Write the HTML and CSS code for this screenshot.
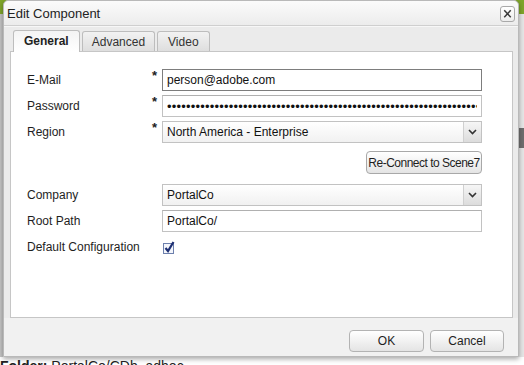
FILE: index.html
```html
<!DOCTYPE html>
<html lang="en">
<head>
  <meta charset="UTF-8" />
  <title>Edit Component</title>
  <link rel="stylesheet" href="styles.css">
</head>
<body>

  <div class="page">
    <div class="page-header"></div>
    <div class="page-body">
      <div class="page-side"></div>
      <div class="page-main"></div>
      <div class="page-rail">
        <div class="rail-block"></div>
      </div>
    </div>
    <div class="page-folder"><b>Folder:</b> PortalCo/CDb_adhoc</div>
  </div>

  <div class="dialog">
    <div class="dialog-title">
      <span>Edit Component</span>
      <button class="close-btn" title="Close">
        <svg width="14" height="15" viewBox="0 0 14 15">
          <path d="M3.5 4 L10.5 11.5 M10.5 4 L3.5 11.5" stroke="#3a3a3a" stroke-width="1.6" fill="none"/>
        </svg>
      </button>
    </div>

    <div class="dialog-body">
      <ul class="tabs">
        <li class="tab active">General</li>
        <li class="tab">Advanced</li>
        <li class="tab">Video</li>
      </ul>

      <div class="tab-panel">
        <div class="form-grid">
          <label>E-Mail</label>
          <span class="req">*</span>
          <input type="text" class="field focused" value="person@adobe.com">

          <label>Password</label>
          <span class="req">*</span>
          <input type="password" class="field password" value="passwordpasswordpasswordpasswordpasswordpasswordpasswordpasswordpasswordpassword">

          <label>Region</label>
          <span class="req">*</span>
          <div class="select">
            <span class="select-text">North America - Enterprise</span>
            <span class="select-arrow">
              <svg width="9" height="6" viewBox="0 0 9 6"><path d="M1 1 L4.5 4.5 L8 1" stroke="#333" stroke-width="1.6" fill="none"/></svg>
            </span>
          </div>

          <div class="button-row">
            <button class="btn reconnect">Re-Connect to Scene7</button>
          </div>

          <label>Company</label>
          <span></span>
          <div class="select">
            <span class="select-text">PortalCo</span>
            <span class="select-arrow">
              <svg width="9" height="6" viewBox="0 0 9 6"><path d="M1 1 L4.5 4.5 L8 1" stroke="#333" stroke-width="1.6" fill="none"/></svg>
            </span>
          </div>

          <label>Root Path</label>
          <span></span>
          <input type="text" class="field" value="PortalCo/">

          <label>Default Configuration</label>
          <span></span>
          <div class="check">
            <svg width="14" height="14" viewBox="0 0 14 14">
              <rect x="1.5" y="3.5" width="10" height="10" fill="#f4f6fb" stroke="#6d80ad"/>
              <path d="M3.5 8 L6 11 L11.5 2" stroke="#1d2f73" stroke-width="2.2" fill="none"/>
            </svg>
          </div>
        </div>
      </div>
    </div>

    <div class="dialog-footer">
      <button class="btn footer-btn ok">OK</button>
      <button class="btn footer-btn">Cancel</button>
    </div>
  </div>

</body>
</html>
```

FILE: styles.css
```css
* {
  margin: 0;
  padding: 0;
  box-sizing: border-box;
  font-family: 'Liberation Sans', Arial, sans-serif;
}

body {
  width: 524px;
  height: 365px;
  overflow: hidden;
  background-color: #ffffff;
  position: relative;
  font-size: 12px;
  color: #1e1e1e;
}

/* page behind the dialog */
.page {
  display: flex;
  flex-direction: column;
  height: 365px;
}

.page-header {
  height: 14px;
  background-color: #7fa52a;
}

.page-body {
  flex: 1;
  display: flex;
}

.page-side {
  width: 3px;
  background-color: #c4c4c4;
}

.page-main {
  flex: 1;
  background-color: #fafafa;
}

.page-rail {
  width: 6px;
  background-color: #e6e6e6;
  padding-top: 114px;
}

.rail-block {
  height: 20px;
  background-color: #6e6e6e;
}

.page-folder {
  height: 8px;
  line-height: 18px;
  overflow: hidden;
  font-size: 14px;
  color: #222;
  background-color: #fff;
}

/* dialog window */
.dialog {
  position: absolute;
  top: 0;
  left: 3px;
  width: 516px;
  height: 357px;
  display: flex;
  flex-direction: column;
  background-color: #ebebeb;
  border: 1px solid #b9b9b9;
  border-radius: 5px 5px 0 0;
  box-shadow: 0 2px 5px rgba(0, 0, 0, 0.35);
}

.dialog-title {
  height: 25px;
  display: flex;
  justify-content: space-between;
  align-items: center;
  padding: 1px 3px 0 3px;
  font-size: 13px;
  color: #222;
  background: linear-gradient(#fbfbfb, #ececec);
  border-bottom: 1px solid #cfcfcf;
  border-radius: 5px 5px 0 0;
}

.close-btn {
  width: 15px;
  height: 16px;
  display: flex;
  align-items: center;
  justify-content: center;
  background: linear-gradient(#ffffff, #ededed);
  border: 1px solid #a9a9a9;
  border-radius: 3px;
}

.dialog-body {
  display: flex;
  flex-direction: column;
  padding: 0 5px 0 6px;
  border-top: 1px solid #f7f7f7;
}

.tabs {
  list-style: none;
  height: 24px;
  display: flex;
  align-items: flex-end;
  gap: 2px;
  padding-left: 3px;
  position: relative;
  z-index: 1;
}

.tab {
  height: 20px;
  padding: 0 10px;
  display: flex;
  align-items: center;
  color: #333;
  background: linear-gradient(#f2f2f2, #dedede);
  border: 1px solid #bdbdbd;
  border-bottom: none;
  border-radius: 3px 3px 0 0;
}

.tab.active {
  height: 22px;
  margin-bottom: -1px;
  padding: 0 10px 1px 10px;
  font-weight: bold;
  color: #222;
  background: linear-gradient(#f4f4f4, #ffffff);
}

.tab:nth-child(2) {
  padding: 0 9px;
  min-width: 67px;
}

.tab:nth-child(3) {
  min-width: 47px;
}

.tab-panel {
  height: 267px;
  background-color: #ffffff;
  border: 1px solid #c6c6c6;
  padding: 17px 30px 0 16px;
}

.form-grid {
  display: grid;
  grid-template-columns: 125px 10px 1fr;
  grid-auto-rows: minmax(22px, auto);
  row-gap: 4px;
  align-items: center;
}

.form-grid label {
  color: #1e1e1e;
}

.req {
  align-self: start;
  font-size: 13px;
  font-weight: bold;
  line-height: 12px;
  padding-top: 1px;
  color: #222;
}

.field {
  height: 22px;
  width: 100%;
  padding: 0 4px;
  font-size: 12px;
  color: #111;
  border: 1px solid #c2c2c2;
  border-top-color: #b0b0b0;
  background-color: #ffffff;
  outline: none;
}

.field.focused {
  border-color: #7d7d7d;
}

.field.password {
  font-size: 13px;
  letter-spacing: 0.2px;
}

.select {
  height: 22px;
  display: flex;
  align-items: center;
  border: 1px solid #c2c2c2;
  background: linear-gradient(#ffffff, #f1f1f1);
}

.select-text {
  flex: 1;
  padding-left: 4px;
  color: #111;
}

.select-arrow {
  width: 18px;
  height: 20px;
  display: flex;
  align-items: center;
  justify-content: center;
  border-left: 1px solid #d0d0d0;
  background: linear-gradient(#f6f6f6, #dcdcdc);
}

.button-row {
  grid-column: 1 / 4;
  display: flex;
  justify-content: flex-end;
  height: 23px;
  margin: 4px 0 6px 0;
}

.btn {
  font-size: 12px;
  color: #1e1e1e;
  padding: 0 5px;
  background: linear-gradient(#ffffff, #e4e4e4);
  border: 1px solid #a8a8a8;
  border-radius: 4px;
}

.btn.reconnect {
  width: 116px;
  padding: 0;
  letter-spacing: -0.5px;
}

.check {
  display: flex;
  align-items: center;
}

.dialog-footer {
  flex: 1;
  display: flex;
  justify-content: flex-end;
  align-items: flex-start;
  gap: 6px;
  padding: 12px 14px 0 0;
  background-color: #f1f1f1;
}

.footer-btn {
  height: 22px;
  width: 74px;
  border-color: #b3b3b3;
}

.footer-btn.ok {
  width: 75px;
}
```
